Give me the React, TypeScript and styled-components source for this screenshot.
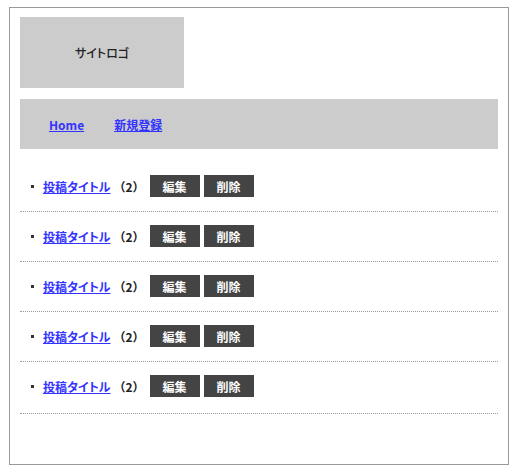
import React from "react";
import styled, { createGlobalStyle } from "styled-components";

const Global = createGlobalStyle`
  html, body { margin: 0; padding: 0; background: #fff; }
  body {
    font-family: "Noto Sans CJK JP", "Liberation Sans", sans-serif;
    color: #222;
  }
`;

const Page = styled.div`
  padding-top: 7px;
`;

const Frame = styled.div`
  box-sizing: border-box;
  width: 500px;
  margin: 0 auto;
  border: 1px solid #999;
  padding: 9px 10px 50px;
`;

const Logo = styled.div`
  width: 164px;
  height: 71px;
  background: #ccc;
  display: flex;
  align-items: center;
  justify-content: center;
  font-size: 12px;
  font-weight: 500;
  font-feature-settings: "palt";
  color: #222;
`;

const Nav = styled.nav`
  margin-top: 11px;
  height: 50px;
  background: #ccc;
  display: flex;
  align-items: center;
  gap: 30px;
  padding-left: 29px;
`;

const NavLink = styled.a`
  font-size: 12px;
  font-weight: 700;
  color: #3333ff;
  text-decoration: underline;
`;

const List = styled.ul`
  list-style: none;
  margin: 13px 0 0;
  padding: 0;
`;

const Item = styled.li`
  display: flex;
  align-items: center;
  padding: 13px 0 14px 11px;
  border-bottom: 1px dotted #999;
  &:last-child {
    padding-bottom: 16px;
  }
`;

const Bullet = styled.span`
  width: 3px;
  height: 3px;
  background: #333;
  margin-right: 9px;
`;

const PostLink = styled.a`
  font-size: 12px;
  font-weight: 700;
  font-feature-settings: "palt";
  color: #3333ff;
  text-decoration: underline;
`;

const Count = styled.span`
  font-size: 12px;
  font-weight: 700;
  color: #222;
  text-spacing-trim: space-all;
  margin: 0 5px 0 3px;
`;

const Action = styled.button`
  box-sizing: border-box;
  width: 50px;
  height: 22px;
  margin-right: 4px;
  border: none;
  background: #444;
  color: #fff;
  font-family: inherit;
  font-size: 12px;
  font-weight: 700;
  padding: 0;
  display: flex;
  align-items: center;
  justify-content: center;
`;

const posts = [1, 2, 3, 4, 5];

export default function App() {
  return (
    <>
      <Global />
      <Page>
        <Frame>
          <Logo>サイトロゴ</Logo>
          <Nav>
            <NavLink href="#">Home</NavLink>
            <NavLink href="#">新規登録</NavLink>
          </Nav>
          <List>
            {posts.map((p) => (
              <Item key={p}>
                <Bullet />
                <PostLink href="#">投稿タイトル</PostLink>
                <Count>（2）</Count>
                <Action>編集</Action>
                <Action>削除</Action>
              </Item>
            ))}
          </List>
        </Frame>
      </Page>
    </>
  );
}
